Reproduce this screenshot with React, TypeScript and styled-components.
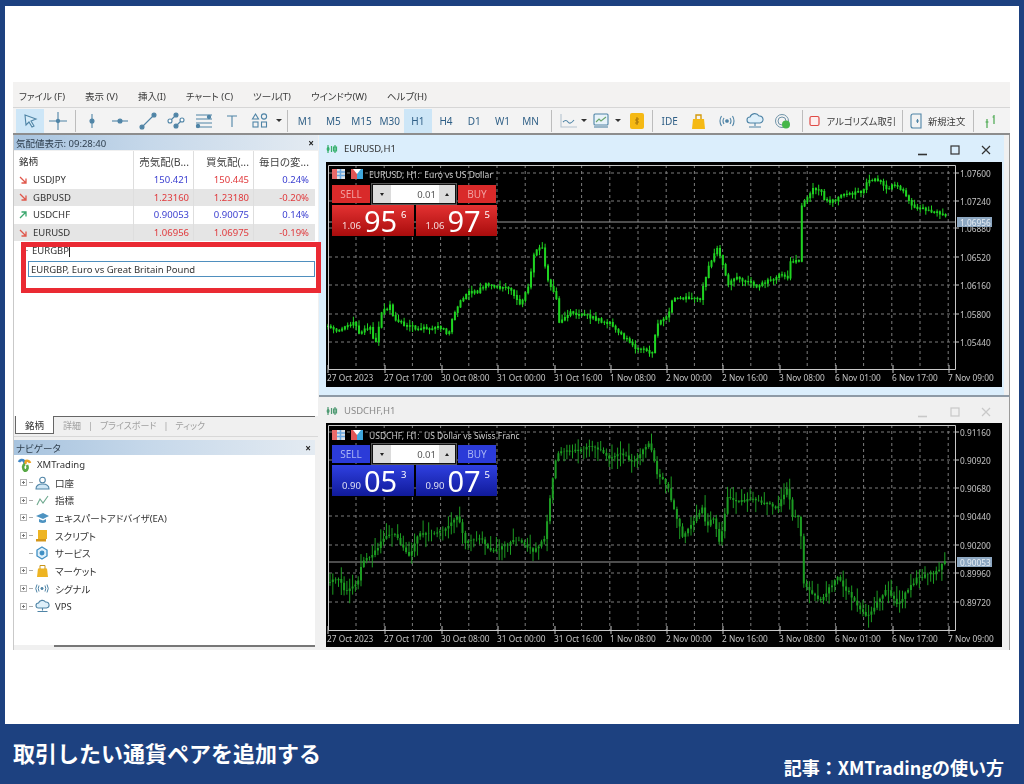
import React from 'react';
import styled, { createGlobalStyle } from 'styled-components';

const UI_FONT = '"Noto Sans", "Noto Sans CJK JP", sans-serif';

const GlobalStyle = createGlobalStyle`
  html, body { margin: 0; padding: 0; background: #1d4180; }
  * { box-sizing: border-box; }
  body { font-family: ${UI_FONT}; }
`;

const Page = styled.div`
  width: 1024px;
  height: 784px;
  background: #1d4180;
  padding-top: 6px;
  display: flex;
  flex-direction: column;
  overflow: hidden;
`;

const Card = styled.div`
  margin: 0 5px;
  height: 718px;
  background: #fff;
  padding: 76px 9px 0 8px;
`;

const Shot = styled.div`
  position: relative;
  height: 568px;
  display: flex;
  flex-direction: column;
  background: #f0f0f0;
  filter: blur(0.4px);
  font-feature-settings: 'palt';
`;

const MenuBar = styled.div`
  height: 26px;
  display: flex;
  align-items: center;
  gap: 20px;
  padding: 2px 0 0 6px;
  background: #f3f2f1;
  border-bottom: 1px solid #d6d6d6;
  font-size: 9.5px;
  color: #3a3a3a;
`;

const Toolbar = styled.div`
  height: 27px;
  display: flex;
  align-items: center;
  padding-left: 3px;
  background: #f3f3f3;
  border-bottom: 2px solid #8d8d8d;
`;

const ToolButton = styled.div<{ $active?: boolean; $w?: number }>`
  width: ${(p) => p.$w ?? 28}px;
  height: 24px;
  flex: none;
  display: flex;
  align-items: center;
  justify-content: center;
  font-size: 10px;
  color: #2f5f86;
  background: ${(p) => (p.$active ? '#cde6f7' : 'transparent')};
`;

const ToolLabel = styled.span`
  font-size: 9.3px;
  color: #3a3a3a;
  white-space: nowrap;
  margin-left: 6px;
`;

const ToolSep = styled.div<{ $w?: number }>`
  width: ${(p) => p.$w ?? 6}px;
  height: 22px;
  flex: none;
  display: flex;
  justify-content: center;
  &::before {
    content: '';
    width: 1px;
    background: #bdbdbd;
  }
`;

const Caret = styled.div`
  width: 0;
  height: 0;
  flex: none;
  margin: 0 2px;
  border-left: 3px solid transparent;
  border-right: 3px solid transparent;
  border-top: 3px solid #333;
`;

const Workspace = styled.div`
  flex: 1;
  display: flex;
  min-height: 0;
`;

const LeftColumn = styled.div`
  position: relative;
  width: 305px;
  flex: none;
  display: flex;
  flex-direction: column;
  border-left: 1px solid #c9c9c9;
`;

const DockTitle = styled.div`
  height: 15px;
  flex: none;
  display: flex;
  align-items: center;
  justify-content: space-between;
  padding: 0 4px 0 2px;
  font-size: 9.5px;
  color: #30404f;
  background: linear-gradient(90deg, #a7c3de 0%, #c6d8ea 45%, #e4ebf2 100%);
`;

const CloseMark = styled.span`
  font-size: 10px;
  line-height: 1;
  font-weight: 700;
  color: #222;
`;

const WatchPanel = styled.div`
  height: 265px;
  flex: none;
  margin-top: 1px;
  background: #fff;
  display: flex;
  flex-direction: column;
  padding-right: 3px;
`;

const QuoteRow = styled.div<{ $shade?: boolean; $h: number }>`
  height: ${(p) => p.$h}px;
  flex: none;
  display: grid;
  grid-template-columns: 119px 60px 60px 60px;
  background: ${(p) => (p.$shade ? '#e5e5e5' : '#fff')};
  font-size: 9.5px;
`;

const NameCell = styled.div`
  display: flex;
  align-items: center;
  gap: 6px;
  padding-left: 5px;
  color: #333;
`;

const NumCell = styled.div<{ $tone?: 'red' | 'blue' | 'head' }>`
  display: flex;
  align-items: center;
  justify-content: flex-end;
  padding-right: 4px;
  border-left: 1px solid #dedede;
  white-space: nowrap;
  font-size: ${(p) => (p.$tone === 'head' ? '10.5px' : '9.5px')};
  color: ${(p) =>
    p.$tone === 'red' ? '#e0393c' : p.$tone === 'blue' ? '#3a3ed0' : '#444'};
`;

const AddRow = styled.div`
  height: 19px;
  display: flex;
  align-items: center;
  font-size: 9.5px;
  color: #333;
  padding-left: 18px;
  &::before {
    content: '';
    width: 7px;
    height: 1px;
    background: #aaa;
    margin-left: -11px;
    margin-right: 4px;
  }
`;

const TextCursor = styled.span`
  display: inline-block;
  width: 1px;
  height: 12px;
  background: #222;
`;

const Suggest = styled.div`
  height: 16px;
  margin: 1px 0 0 14px;
  display: flex;
  align-items: center;
  padding-left: 2px;
  font-size: 9.5px;
  color: #333;
  border: 1px solid #4f8fbe;
`;

const Highlight = styled.div`
  position: absolute;
  left: 7px;
  top: 107px;
  width: 300px;
  height: 51px;
  border: 5px solid #ea2a33;
  z-index: 2;
`;

const TabStrip = styled.div`
  height: 21px;
  flex: none;
  display: flex;
  align-items: flex-start;
  border-bottom: 1px solid #d8d8d8;
  padding-right: 3px;
`;

const ActiveTab = styled.div`
  width: 39px;
  height: 18px;
  margin-left: 1px;
  display: flex;
  align-items: center;
  justify-content: center;
  font-size: 9.5px;
  color: #333;
  background: #fff;
  border: 1px solid #666;
  border-top: none;
`;

const TabRest = styled.div`
  flex: 1;
  height: 100%;
  display: flex;
  align-items: center;
  gap: 7px;
  padding: 0 0 3px 9px;
  border-top: 1px solid #666;
  font-size: 9px;
  color: #a0a0a0;
`;

const NavPanel = styled.div`
  margin-top: 3px;
  flex: 1;
  display: flex;
  flex-direction: column;
  padding-right: 3px;
`;

const TreeBody = styled.div`
  height: 190px;
  flex: none;
  background: #fff;
  padding-top: 1px;
`;

const TreeRow = styled.div`
  height: 17.7px;
  display: flex;
  align-items: center;
  font-size: 9.5px;
  color: #333;
`;

const Expander = styled.span<{ $leaf?: boolean }>`
  width: 7px;
  height: 7px;
  margin: 0 2px 0 6px;
  flex: none;
  border: ${(p) => (p.$leaf ? 'none' : '1px solid #b5b5b5')};
  background: ${(p) =>
    p.$leaf
      ? 'none'
      : 'linear-gradient(#777, #777) center / 3px 1px no-repeat, linear-gradient(#777, #777) center / 1px 3px no-repeat'};
`;

const TreeDash = styled.span`
  width: 4px;
  height: 1px;
  background: #aaa;
  flex: none;
  margin-right: 1px;
`;

const TreeIcon = styled.span<{ $root?: boolean }>`
  width: 16px;
  height: 14px;
  flex: none;
  margin: 0 5px 0 ${(p) => (p.$root ? '2px' : '0')};
  display: flex;
  align-items: center;
  justify-content: center;
`;

const BottomStrip = styled.div`
  flex: 1;
  background: #f0f0f0;
  margin-left: 40px;
  &::before {
    content: '';
    display: block;
    height: 2px;
    background: #777;
  }
`;

const RightColumn = styled.div`
  flex: 1;
  display: flex;
  flex-direction: column;
  padding-left: 1px;
  border-right: 1px solid #9a9a9a;
`;

const ChartWindow = styled.div<{ $active?: boolean; $h: number }>`
  width: 685px;
  height: ${(p) => p.$h}px;
  flex: none;
  padding: 0 2px 0 7px;
  background: ${(p) => (p.$active ? '#dbeefc' : '#f0f0f0')};
`;

const WindowBar = styled.div<{ $active?: boolean; $h: number }>`
  height: ${(p) => p.$h}px;
  display: flex;
  align-items: center;
  gap: 6px;
  font-size: 9.5px;
  color: ${(p) => (p.$active ? '#333' : '#8a8a8a')};
`;

const WindowButtons = styled.div`
  margin-left: auto;
  width: 85px;
  display: flex;
  justify-content: space-between;
  padding: 3px 10px 0 0;
`;

const WindowGap = styled.div`
  height: 3px;
  flex: none;
  border-top: 2px solid #8e9aa6;
`;

const ChartBox = styled.div<{ $h: number }>`
  position: relative;
  height: ${(p) => p.$h}px;
  background: #000;
  overflow: hidden;
  svg {
    display: block;
  }
`;

const AxisText = styled.text<{ $light?: boolean }>`
  font-family: ${UI_FONT};
  font-size: 8.3px;
  fill: ${(p) => (p.$light ? '#e6edf4' : '#c4c4c4')};
`;

const ChartCaption = styled.div`
  position: absolute;
  left: 6px;
  top: 6px;
  display: flex;
  align-items: center;
  font-size: 8.5px;
  white-space: pre;
  color: #c9c9c9;
`;

const FlagSvg = styled.svg`
  margin-right: 5px;
`;

const TradePanel = styled.div<{ $top: number }>`
  position: absolute;
  left: 6px;
  top: ${(p) => p.$top}px;
  width: 165px;
`;

const TradeTop = styled.div`
  display: flex;
  align-items: center;
  height: 20px;
`;

const SideButton = styled.div<{ $tone: 'red' | 'blue' }>`
  width: 38px;
  height: 18px;
  display: flex;
  align-items: center;
  justify-content: center;
  font-size: 10px;
  color: ${(p) => (p.$tone === 'red' ? '#f2a0a0' : '#a8b4f4')};
  background: ${(p) => (p.$tone === 'red' ? '#d92a2a' : '#2b3bd8')};
`;

const Spinner = styled.div`
  width: 84px;
  height: 20px;
  margin: 0 2px;
  display: grid;
  grid-template-columns: 18px 1fr 16px;
  background: #fff;
  border: 1px solid #111;
  box-shadow: 0 0 0 1px #555;
  font-size: 9.5px;
  color: #555;
`;

const SpinArrow = styled.div<{ $up?: boolean }>`
  background: #dcdcdc;
  display: flex;
  align-items: center;
  justify-content: center;
  &::before {
    content: '';
    border-left: 2.5px solid transparent;
    border-right: 2.5px solid transparent;
    border-top: ${(p) => (p.$up ? 'none' : '3px solid #222')};
    border-bottom: ${(p) => (p.$up ? '3px solid #222' : 'none')};
  }
`;

const SpinValue = styled.div`
  display: flex;
  align-items: center;
  justify-content: flex-end;
  padding-right: 3px;
`;

const TradePrices = styled.div`
  display: flex;
  gap: 2px;
  margin-top: 1px;
`;

const PriceBox = styled.div<{ $tone: 'red' | 'blue' }>`
  width: 82px;
  height: 31px;
  display: flex;
  align-items: center;
  justify-content: flex-end;
  padding-right: 7px;
  color: #fff;
  background: ${(p) =>
    p.$tone === 'red'
      ? 'linear-gradient(180deg, #e43232, #a80c0c)'
      : 'linear-gradient(180deg, #2f40e0, #101a9a)'};
`;

const PriceSmall = styled.span`
  font-size: 9.5px;
  align-self: flex-end;
  margin-bottom: 4px;
  opacity: 0.85;
`;

const PriceBig = styled.span`
  font-size: 29px;
  line-height: 31px;
  margin: 0 4px 0 3px;
`;

const PriceSup = styled.span`
  font-size: 9.5px;
  align-self: flex-start;
  margin-top: 3px;
`;

const Footer = styled.footer`
  flex: 1;
  position: relative;
  color: #fff;
  font-family: "Noto Sans CJK JP", sans-serif;
  font-weight: 700;
`;

const FooterTitle = styled.div`
  position: absolute;
  left: 13px;
  top: 13px;
  font-size: 22px;
  line-height: 30px;
  white-space: nowrap;
`;

const FooterSource = styled.div`
  position: absolute;
  right: 20px;
  top: 31px;
  font-size: 18px;
  line-height: 24px;
  white-space: nowrap;
`;

type Point = [number, number];

const EURUSD_PATH: Point[] = [
  [328, 328], [337, 333], [355, 324], [360, 335], [370, 327], [375, 348], [382, 313],
  [390, 307], [395, 322], [417, 330], [443, 328], [448, 337], [453, 315], [467, 293],
  [477, 293], [485, 286], [510, 290], [520, 305], [528, 290], [535, 250], [543, 250],
  [547, 280], [557, 300], [558, 325], [572, 313], [587, 317], [610, 325], [633, 347],
  [640, 350], [652, 355], [657, 325], [668, 317], [673, 298], [700, 300], [707, 273],
  [717, 248], [723, 267], [728, 287], [735, 278], [758, 287], [783, 275], [788, 280],
  [790, 263], [800, 262], [801, 207], [813, 190], [820, 190], [825, 202], [833, 202],
  [840, 198], [863, 192], [868, 180], [880, 182], [887, 190], [897, 185], [907, 197],
  [913, 207], [923, 210], [945, 215], [948, 223]
];

const USDCHF_PATH: Point[] = [
  [330, 582], [340, 577], [343, 592], [357, 585], [363, 560], [373, 555], [385, 535],
  [395, 535], [410, 558], [417, 535], [443, 532], [458, 515], [465, 542], [480, 538],
  [492, 552], [517, 538], [533, 552], [545, 538], [550, 498], [557, 452], [573, 452],
  [593, 445], [610, 458], [620, 452], [633, 462], [650, 442], [657, 475], [668, 485],
  [670, 495], [683, 538], [702, 508], [707, 528], [713, 515], [720, 545], [728, 495],
  [737, 502], [753, 498], [777, 508], [788, 485], [792, 518], [800, 515], [803, 582],
  [820, 602], [837, 577], [867, 618], [887, 588], [897, 605], [917, 578], [937, 572],
  [947, 558]
];

const noise = (i: number, seed: number) => {
  const v = Math.sin(i * 12.9898 + seed) * 43758.5453;
  return v - Math.floor(v);
};

const interpolate = (path: Point[], x: number) => {
  for (let i = 1; i < path.length; i++) {
    if (x <= path[i][0]) {
      const [x0, y0] = path[i - 1];
      const [x1, y1] = path[i];
      return y0 + ((y1 - y0) * (x - x0)) / Math.max(x1 - x0, 0.01);
    }
  }
  return path[path.length - 1][1];
};

// thin wick path plus thicker body path for every hourly candle
const buildCandles = (path: Point[], seed: number, wick: number, body: number) => {
  let wicks = '';
  let bodies = '';
  const start = path[0][0];
  const end = path[path.length - 1][0];
  let i = 0;
  for (let x = start; x <= end; x += 2.82) {
    const y = interpolate(path, x) + (noise(i + 40, seed) - 0.5) * 3;
    const prev = interpolate(path, x - 2.82) + (noise(i + 39, seed) - 0.5) * 3;
    const top = Math.min(y, prev);
    const bottom = Math.max(y, prev);
    const up = noise(i, seed) ** 2 * wick + 1;
    const down = noise(i + 99, seed) ** 2 * wick + 1;
    const px = x.toFixed(1);
    wicks += `M${px} ${(top - up).toFixed(1)}V${(bottom + down).toFixed(1)}`;
    bodies += `M${px} ${(top - body * 0.5).toFixed(1)}V${(bottom + body * 0.5).toFixed(1)}`;
    i++;
  }
  return { wicks, bodies };
};

const GRID_X = Array.from({ length: 22 }, (_, i) => 356 + i * 28.2);
const TICK_LABELS: [number, string][] = [
  [327, '27 Oct 2023'], [384, '27 Oct 17:00'], [441, '30 Oct 08:00'], [497, '31 Oct 00:00'],
  [554, '31 Oct 16:00'], [610, '1 Nov 08:00'], [666, '2 Nov 00:00'], [722, '2 Nov 16:00'],
  [779, '3 Nov 08:00'], [835, '6 Nov 01:00'], [892, '6 Nov 17:00'], [948, '7 Nov 09:00']
];

type ChartProps = {
  originY: number;
  height: number;
  plotTop: number;
  plotBottom: number;
  prices: [number, string][];
  last: [number, string];
  path: Point[];
  color: string;
  seed: number;
  wick: number;
  body: number;
};

const PriceChart = ({
  originY, height, plotTop, plotBottom, prices, last, path, color, seed, wick, body
}: ChartProps) => {
  const { wicks, bodies } = buildCandles(path, seed, wick, body);
  return (
    <svg width={676} height={height} viewBox={`326 ${originY} 676 ${height}`}>
      <g stroke="#7c7c7c" strokeWidth="1" strokeDasharray="3 3">
        {prices.map(([y]) => (
          <line key={y} x1={329} x2={955} y1={y} y2={y} />
        ))}
        {GRID_X.map((x) => (
          <line key={x} x1={x} x2={x} y1={plotTop} y2={plotBottom} />
        ))}
      </g>
      <line x1={329} x2={955} y1={last[0]} y2={last[0]} stroke="#9a9a9a" />
      <path d={wicks} stroke={color} strokeWidth="1" fill="none" />
      <path d={bodies} stroke={color} strokeWidth="2" fill="none" />
      <path
        d={`M328.5 ${plotTop + 0.5}H955.5V${plotBottom + 0.5}H328.5Z`}
        stroke="#c8c8c8"
        fill="none"
      />
      {TICK_LABELS.map(([x, label]) => (
        <g key={label}>
          <line x1={x + 1} x2={x + 1} y1={plotBottom - 4} y2={plotBottom + 4} stroke="#c8c8c8" />
          <AxisText x={x} y={plotBottom + 12}>{label}</AxisText>
        </g>
      ))}
      {prices.map(([y, label]) => (
        <g key={label}>
          <line x1={955} x2={959} y1={y} y2={y} stroke="#c8c8c8" />
          <AxisText x={960} y={y + 3.5}>{label}</AxisText>
        </g>
      ))}
      <rect x={957} y={last[0] - 5} width={35} height={10} fill="#8ea8c2" />
      <AxisText $light x={960} y={last[0] + 3.5}>{last[1]}</AxisText>
    </svg>
  );
};

const Svg = ({ w = 16, h = 16, children }: { w?: number; h?: number; children: React.ReactNode }) => (
  <svg width={w} height={h} viewBox={`0 0 ${w} ${h}`} fill="none" stroke="#4f84a6" strokeWidth="1.1">
    {children}
  </svg>
);

const CursorIcon = () => (
  <Svg>
    <path d="M3 2l11 4-5 2 3 5-2 1-3-5-3 3z" fill="#d6ecf9" />
  </Svg>
);
const CrossIcon = () => (
  <Svg w={20} h={20}>
    <path d="M10 1v18M1 10h18" />
    <circle cx="10" cy="10" r="1.6" fill="#4f84a6" />
  </Svg>
);
const VLineIcon = () => (
  <Svg>
    <path d="M8 1v14" />
    <circle cx="8" cy="8" r="2" fill="#4f84a6" />
  </Svg>
);
const HLineIcon = () => (
  <Svg w={18}>
    <path d="M1 8h16" />
    <circle cx="9" cy="8" r="2" fill="#4f84a6" />
  </Svg>
);
const TrendIcon = () => (
  <Svg w={18} h={18}>
    <path d="M3 15L15 3" />
    <circle cx="3" cy="15" r="2" fill="#4f84a6" />
    <circle cx="15" cy="3" r="2" fill="#4f84a6" />
  </Svg>
);
const ChannelIcon = () => (
  <Svg w={18} h={18}>
    <path d="M2 10l7-7M8 15l7-7" />
    <circle cx="3" cy="9" r="2" fill="#fff" />
    <circle cx="9" cy="3" r="2" fill="#4f84a6" />
    <circle cx="9" cy="14" r="2" fill="#4f84a6" />
    <circle cx="15" cy="8" r="2" fill="#fff" />
  </Svg>
);
const FiboIcon = () => (
  <Svg w={20} h={18}>
    <path d="M2 3h16M2 7h16M2 11h16M2 15h16" />
    <circle cx="15" cy="5" r="1.6" fill="#4f84a6" />
    <circle cx="4" cy="14" r="1.6" fill="#4f84a6" />
  </Svg>
);
const TextToolIcon = () => (
  <Svg>
    <path d="M3 3h10M8 3v11" />
  </Svg>
);
const ShapesIcon = () => (
  <Svg w={18} h={18}>
    <path d="M4.5 2L7.5 7H1.5Z" />
    <circle cx="13" cy="4.5" r="2.6" />
    <rect x="2" y="10" width="5" height="5" />
    <rect x="10.5" y="10" width="5" height="5" />
  </Svg>
);
const LineChartIcon = () => (
  <Svg w={18} h={18}>
    <path d="M1 2v13h16" stroke="#b5c4cf" />
    <path d="M3 10q3-3 5 0t6-2" />
  </Svg>
);
const TemplateIcon = () => (
  <Svg w={18} h={18}>
    <rect x="2" y="2" width="14" height="11" rx="1" fill="#e8f3fa" />
    <path d="M4 10l3-3 2 2 5-4" stroke="#6aa56a" />
    <path d="M2 15h14" />
  </Svg>
);
const CoinIcon = () => (
  <svg width="14" height="16" viewBox="0 0 14 16">
    <rect width="14" height="16" rx="2" fill="#f5b914" />
    <path d="M7 4v8M9 6H6v2h2v2H5" stroke="#a8760a" fill="none" />
  </svg>
);
const BagIcon = () => (
  <svg width="13" height="16" viewBox="0 0 13 16">
    <path d="M1 6h11l1 10H0z" fill="#f5b914" />
    <path d="M4 6V2h5v4" fill="none" stroke="#d39a0c" strokeWidth="1.4" />
  </svg>
);
const SignalIcon = () => (
  <Svg w={16} h={12}>
    <circle cx="8" cy="6" r="1.3" fill="#4f84a6" />
    <path d="M5 3q-2 3 0 6M11 3q2 3 0 6M2.5 1q-3 5 0 10M13.500 1q3 5 0 10" />
  </Svg>
);
const CloudIcon = () => (
  <Svg w={18} h={16}>
    <path d="M4 10a3 3 0 010-6 5 5 0 019-1 3.5 3.5 0 011 7z" fill="#dff0fa" />
    <path d="M9 10v3M3 14h12" />
  </Svg>
);
const RadarIcon = () => (
  <svg width="16" height="16" viewBox="0 0 16 16" fill="none" stroke="#6f93a8">
    <circle cx="7" cy="8" r="6.5" />
    <circle cx="7" cy="8" r="4" />
    <circle cx="11" cy="11.5" r="4" fill="#45b649" stroke="none" />
  </svg>
);
const AlgoIcon = () => (
  <svg width="11" height="12" viewBox="0 0 11 12" fill="#fdeeee" stroke="#df4a45" strokeWidth="1.2">
    <rect x="1" y="1.5" width="9" height="9" rx="1.5" />
  </svg>
);
const NewOrderIcon = () => (
  <Svg w={12} h={16}>
    <path d="M3 1h8v14H3M6 8h3M7.5 6v4M3 1Q1 1 1 3v10q0 2 2 2" />
  </Svg>
);
const StepsIcon = () => (
  <svg width="14" height="16" viewBox="0 0 14 16" fill="none" stroke="#4aa84f" strokeWidth="1.2">
    <path d="M3 6v9M1.5 9h3M10 2v9M8.5 4H10" />
  </svg>
);
const TrendArrow = ({ up }: { up?: boolean }) => (
  <svg width="8" height="8" viewBox="0 0 8 8" fill="none" stroke={up ? '#3aa76d' : '#e0564a'} strokeWidth="1.3">
    {up ? <path d="M1 7l6-6M2.5 1H7v4.5" /> : <path d="M1 1l6 6M2.5 7H7V2.5" />}
  </svg>
);
const PairIcon = ({ dim }: { dim?: boolean }) => (
  <svg width="12" height="12" viewBox="0 0 12 12" fill="none" stroke={dim ? '#4f9a73' : '#35b06c'} strokeWidth="1.2">
    <path d="M2 2v8M2 4q-1.500 2 0 4M2 4q2 2 0 4M9 2v8M7.500 4h3v4h-3z" />
    <path d="M5.500 3v6" />
  </svg>
);
const FlagIcons = () => (
  <FlagSvg width="32" height="12" viewBox="0 0 32 12">
    <rect x="0" y="1" width="13" height="10" fill="#d9dfe6" />
    <path d="M0 1h5v10H0z" fill="#e96a6a" />
    <path d="M5 4h8M5 7.500h8M8.500 1v10" stroke="#6aa7e0" strokeWidth="1.5" />
    <rect x="19" y="1" width="6" height="10" fill="#e05555" />
    <rect x="25" y="1" width="6" height="10" fill="#3fa7dc" />
    <path d="M21 1h8l-4 5z" fill="#fff" />
  </FlagSvg>
);
const WinButton = ({ kind, dim }: { kind: 'min' | 'max' | 'close'; dim?: boolean }) => (
  <svg width="12" height="12" viewBox="0 0 12 12" fill="none" stroke={dim ? '#c8c8c8' : '#333'} strokeWidth="1.2">
    {kind === 'min' && <path d="M1 10.500h9" strokeWidth="1.6" />}
    {kind === 'max' && <rect x="2" y="2" width="8" height="8" />}
    {kind === 'close' && <path d="M2 2l8 8M10 2l-8 8" />}
  </svg>
);

const XmLogo = () => (
  <svg width="15" height="14" viewBox="0 0 15 14" fill="none" strokeWidth="2.6">
    <path d="M2 4a3 3 0 015-1l1 3" stroke="#3d86c6" />
    <path d="M8 6l1-3a3 3 0 014 2" stroke="#e9a224" />
    <path d="M8 6c-2 1-3 4 0 7 3-1 3-4 2-6" stroke="#58a845" />
  </svg>
);
const AccountIcon = () => (
  <Svg w={15} h={14}>
    <circle cx="7.500" cy="4" r="2.800" />
    <path d="M1 13q0-5 6.500-5T14 13z" fill="#cfe6f5" />
  </Svg>
);
const IndicatorIcon = () => (
  <svg width="13" height="11" viewBox="0 0 13 11" fill="none" stroke="#6ea88e" strokeWidth="1.100">
    <path d="M1 10l3-6 3 4 5-7" />
  </svg>
);
const ExpertIcon = () => (
  <svg width="15" height="12" viewBox="0 0 15 12" fill="#4d93c1">
    <path d="M1 4l7-3 6 3-6 3z" />
    <path d="M4 7v3q4 2 7 0V7l-3 1.500z" />
  </svg>
);
const ScriptIcon = () => (
  <svg width="12" height="13" viewBox="0 0 12 13" fill="#eeb422">
    <path d="M2 1h9v9H2z" />
    <path d="M0 10h10v2.500H0z" fill="#d4971a" />
  </svg>
);
const ServiceIcon = () => (
  <svg width="14" height="14" viewBox="0 0 14 14" fill="#dff0fa" stroke="#3f8fc4" strokeWidth="1.300">
    <path d="M7 1l5 3v6l-5 3-5-3V4z" />
    <circle cx="7" cy="7" r="1.800" fill="#3f8fc4" />
  </svg>
);
const MarketIcon = () => (
  <svg width="11" height="13" viewBox="0 0 11 13">
    <path d="M1 4.500h9l1 8.500H0z" fill="#eeb422" />
    <path d="M3 5V1.500h5V5" fill="none" stroke="#c9951a" />
  </svg>
);
const SignalTreeIcon = () => (
  <svg width="14" height="9" viewBox="0 0 14 9" fill="none" stroke="#4f84a6">
    <circle cx="7" cy="4.500" r="1.100" fill="#4f84a6" />
    <path d="M4 1.500q-1.500 3 0 6M10 1.500q1.500 3 0 6M2 .5q-2.500 4 0 8M12 .5q2.500 4 0 8" />
  </svg>
);
const VpsIcon = () => (
  <Svg w={15} h={14}>
    <path d="M3.500 9a2.500 2.500 0 010-5 4 4 0 017-1 3 3 0 011 6z" fill="#dff0fa" />
    <path d="M7.500 9v2.500M2.500 12.500h10" />
  </Svg>
);

const MENU = ['ファイル (F)', '表示 (V)', '挿入(I)', 'チャート (C)', 'ツール(T)', 'ウインドウ(W)', 'ヘルプ(H)'];
const PERIODS = ['M1', 'M5', 'M15', 'M30', 'H1', 'H4', 'D1', 'W1', 'MN'];

type Quote = { name: string; up?: boolean; bid: string; ask: string; change: string; tones: ('red' | 'blue')[] };

const QUOTES: Quote[] = [
  { name: 'USDJPY', bid: '150.421', ask: '150.445', change: '0.24%', tones: ['blue', 'red', 'blue'] },
  { name: 'GBPUSD', bid: '1.23160', ask: '1.23180', change: '-0.20%', tones: ['red', 'red', 'red'] },
  { name: 'USDCHF', up: true, bid: '0.90053', ask: '0.90075', change: '0.14%', tones: ['blue', 'blue', 'blue'] },
  { name: 'EURUSD', bid: '1.06956', ask: '1.06975', change: '-0.19%', tones: ['red', 'red', 'red'] }
];

const TREE: { label: string; icon: React.ReactNode; leaf?: boolean }[] = [
  { label: '口座', icon: <AccountIcon /> },
  { label: '指標', icon: <IndicatorIcon /> },
  { label: 'エキスパートアドバイザ(EA)', icon: <ExpertIcon /> },
  { label: 'スクリプト', icon: <ScriptIcon /> },
  { label: 'サービス', icon: <ServiceIcon />, leaf: true },
  { label: 'マーケット', icon: <MarketIcon /> },
  { label: 'シグナル', icon: <SignalTreeIcon /> },
  { label: 'VPS', icon: <VpsIcon /> }
];

const EUR_PRICES: [number, string][] = [
  [174, '1.07600'], [202, '1.07240'], [229, '1.06880'], [258, '1.06520'],
  [286, '1.06160'], [315, '1.05800'], [343, '1.05440']
];
const CHF_PRICES: [number, string][] = [
  [432, '0.91160'], [460, '0.90920'], [488, '0.90680'], [516, '0.90440'],
  [545, '0.90200'], [573, '0.89960'], [602, '0.89720']
];

type TradeProps = {
  tone: 'red' | 'blue';
  top: number;
  big: string;
  sell: [string, string];
  buy: [string, string];
};

const Trade = ({ tone, top, big, sell, buy }: TradeProps) => (
  <TradePanel $top={top}>
    <TradeTop>
      <SideButton $tone={tone}>SELL</SideButton>
      <Spinner>
        <SpinArrow />
        <SpinValue>0.01</SpinValue>
        <SpinArrow $up />
      </Spinner>
      <SideButton $tone={tone}>BUY</SideButton>
    </TradeTop>
    <TradePrices>
      <PriceBox $tone={tone}>
        <PriceSmall>{big}</PriceSmall>
        <PriceBig>{sell[0]}</PriceBig>
        <PriceSup>{sell[1]}</PriceSup>
      </PriceBox>
      <PriceBox $tone={tone}>
        <PriceSmall>{big}</PriceSmall>
        <PriceBig>{buy[0]}</PriceBig>
        <PriceSup>{buy[1]}</PriceSup>
      </PriceBox>
    </TradePrices>
  </TradePanel>
);

const App = () => (
  <Page>
    <GlobalStyle />
    <Card>
      <Shot>
        <MenuBar>
          {MENU.map((item) => (
            <span key={item}>{item}</span>
          ))}
        </MenuBar>
        <Toolbar>
          <ToolButton $active><CursorIcon /></ToolButton>
          <ToolButton><CrossIcon /></ToolButton>
          <ToolSep />
          <ToolButton><VLineIcon /></ToolButton>
          <ToolButton><HLineIcon /></ToolButton>
          <ToolButton><TrendIcon /></ToolButton>
          <ToolButton><ChannelIcon /></ToolButton>
          <ToolButton><FiboIcon /></ToolButton>
          <ToolButton><TextToolIcon /></ToolButton>
          <ToolButton><ShapesIcon /></ToolButton>
          <Caret />
          <ToolSep $w={7} />
          {PERIODS.map((period) => (
            <ToolButton key={period} $active={period === 'H1'} $w={28.2}>{period}</ToolButton>
          ))}
          <ToolSep $w={14} />
          <ToolButton $w={20}><LineChartIcon /></ToolButton>
          <Caret />
          <ToolButton $w={24}><TemplateIcon /></ToolButton>
          <Caret />
          <ToolButton $w={28}><CoinIcon /></ToolButton>
          <ToolSep $w={4} />
          <ToolButton $w={30}>IDE</ToolButton>
          <ToolButton><BagIcon /></ToolButton>
          <ToolButton><SignalIcon /></ToolButton>
          <ToolButton><CloudIcon /></ToolButton>
          <ToolButton><RadarIcon /></ToolButton>
          <ToolSep $w={12} />
          <ToolButton $w={12}><AlgoIcon /></ToolButton>
          <ToolLabel>アルゴリズム取引</ToolLabel>
          <ToolSep $w={14} />
          <ToolButton $w={12}><NewOrderIcon /></ToolButton>
          <ToolLabel>新規注文</ToolLabel>
          <ToolSep $w={16} />
          <ToolButton $w={20}><StepsIcon /></ToolButton>
        </Toolbar>
        <Workspace>
          <LeftColumn>
            <DockTitle>
              <span>気配値表示: 09:28:40</span>
              <CloseMark>×</CloseMark>
            </DockTitle>
            <WatchPanel>
              <QuoteRow $h={20}>
                <NameCell>銘柄</NameCell>
                <NumCell $tone="head">売気配(B...</NumCell>
                <NumCell $tone="head">買気配(...</NumCell>
                <NumCell $tone="head">毎日の変...</NumCell>
              </QuoteRow>
              {QUOTES.map((quote, index) => (
                <QuoteRow key={quote.name} $h={17.6} $shade={index % 2 === 1}>
                  <NameCell>
                    <TrendArrow up={quote.up} />
                    {quote.name}
                  </NameCell>
                  <NumCell $tone={quote.tones[0]}>{quote.bid}</NumCell>
                  <NumCell $tone={quote.tones[1]}>{quote.ask}</NumCell>
                  <NumCell $tone={quote.tones[2]}>{quote.change}</NumCell>
                </QuoteRow>
              ))}
              <AddRow>
                EURGBP
                <TextCursor />
              </AddRow>
              <Suggest>EURGBP, Euro vs Great Britain Pound</Suggest>
            </WatchPanel>
            <TabStrip>
              <ActiveTab>銘柄</ActiveTab>
              <TabRest>
                <span>詳細</span>
                <span>|</span>
                <span>プライスボード</span>
                <span>|</span>
                <span>ティック</span>
              </TabRest>
            </TabStrip>
            <NavPanel>
              <DockTitle>
                <span>ナビゲータ</span>
                <CloseMark>×</CloseMark>
              </DockTitle>
              <TreeBody>
                <TreeRow>
                  <TreeIcon $root><XmLogo /></TreeIcon>
                  XMTrading
                </TreeRow>
                {TREE.map((node) => (
                  <TreeRow key={node.label}>
                    <Expander $leaf={node.leaf} />
                    <TreeDash />
                    <TreeIcon>{node.icon}</TreeIcon>
                    {node.label}
                  </TreeRow>
                ))}
              </TreeBody>
              <BottomStrip />
            </NavPanel>
            <Highlight />
          </LeftColumn>
          <RightColumn>
            <ChartWindow $active $h={260}>
              <WindowBar $active $h={27}>
                <PairIcon />
                EURUSD,H1
                <WindowButtons>
                  <WinButton kind="min" />
                  <WinButton kind="max" />
                  <WinButton kind="close" />
                </WindowButtons>
              </WindowBar>
              <ChartBox $h={225}>
                <PriceChart
                  originY={163}
                  height={225}
                  plotTop={166}
                  plotBottom={370}
                  prices={EUR_PRICES}
                  last={[223, '1.06956']}
                  path={EURUSD_PATH}
                  color="#1fd321"
                  seed={3.1}
                  wick={5}
                  body={1}
                />
                <ChartCaption>
                  <FlagIcons />
                  EURUSD, H1:  Euro vs US Dollar
                </ChartCaption>
                <Trade tone="red" top={22} big="1.06" sell={['95', '6']} buy={['97', '5']} />
              </ChartBox>
            </ChartWindow>
            <WindowGap />
            <ChartWindow $h={252}>
              <WindowBar $h={25}>
                <PairIcon dim />
                USDCHF,H1
                <WindowButtons>
                  <WinButton kind="min" dim />
                  <WinButton kind="max" dim />
                  <WinButton kind="close" dim />
                </WindowButtons>
              </WindowBar>
              <ChartBox $h={224}>
                <PriceChart
                  originY={423}
                  height={224}
                  plotTop={425}
                  plotBottom={630}
                  prices={CHF_PRICES}
                  last={[562, '0.90053']}
                  path={USDCHF_PATH}
                  color="#1c9c22"
                  seed={7.7}
                  wick={12}
                  body={0}
                />
                <ChartCaption>
                  <FlagIcons />
                  USDCHF, H1:  US Dollar vs Swiss Franc
                </ChartCaption>
                <Trade tone="blue" top={21} big="0.90" sell={['05', '3']} buy={['07', '5']} />
              </ChartBox>
            </ChartWindow>
          </RightColumn>
        </Workspace>
      </Shot>
    </Card>
    <Footer>
      <FooterTitle>取引したい通貨ペアを追加する</FooterTitle>
      <FooterSource>記事：XMTradingの使い方</FooterSource>
    </Footer>
  </Page>
);

export default App;
